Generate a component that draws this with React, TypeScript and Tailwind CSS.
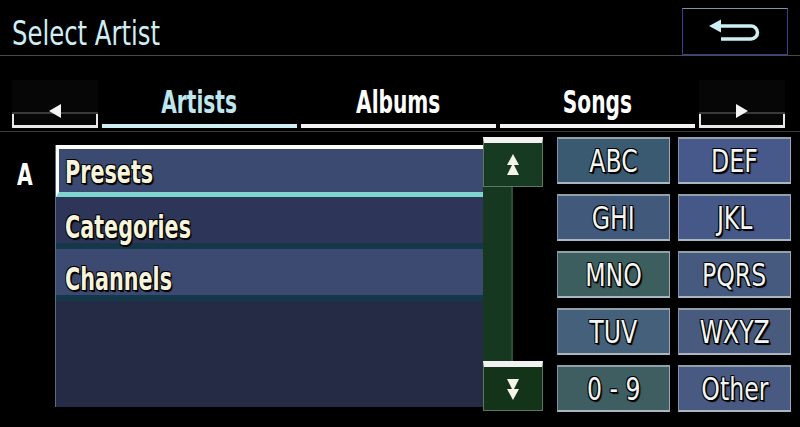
import React from 'react';

const outline =
  '[text-shadow:1px_1px_0_#000,-1px_-1px_0_#000,1px_-1px_0_#000,-1px_1px_0_#000,2px_2px_1px_#000]';

function ReturnIcon() {
  return (
    <svg width="56" height="26" viewBox="0 0 56 26" fill="none">
      <path d="M12 7 H44 A6.5 6.5 0 0 1 44 20 H14" stroke="#cdeef3" strokeWidth="3.5" />
      <path d="M2 7 L14 0.5 L14 13.5 Z" fill="#cdeef3" />
    </svg>
  );
}

function DoubleArrow({ down }: { down?: boolean }) {
  return (
    <svg width="16" height="24" viewBox="0 0 16 24" className={down ? 'rotate-180' : ''}>
      <path d="M8 1 L14 12 L2 12 Z" fill="#f4f4ea" />
      <path d="M8 10 L14 22 L2 22 Z" fill="#f4f4ea" />
    </svg>
  );
}

function SideButton({ dir }: { dir: 'left' | 'right' }) {
  return (
    <div className="relative h-[48px] w-[86px] bg-[#060606] flex items-center justify-center">
      <div className="absolute left-0 right-0 top-[32px] h-[2px] bg-[#3a3a3a]" />
      <div className="absolute left-0 right-0 bottom-0 h-[14px] border-l-2 border-r-2 border-b-[3px] border-[#e8e8e8]" />
      <svg width="14" height="16" viewBox="0 0 14 16" className={`relative mt-[14px] ${dir === 'right' ? 'rotate-180' : ''}`}>
        <path d="M1 8 L13 1 L13 15 Z" fill="#f4f4f4" />
      </svg>
    </div>
  );
}

function Tab({ label, active }: { label: string; active?: boolean }) {
  return (
    <div className="relative h-[48px] w-[195px] flex items-start justify-center">
      <span
        className={`inline-block scale-x-[0.7] font-bold text-[32px] leading-[44px] ${
          active ? 'text-[#bfe6ee]' : 'text-white'
        }`}
      >
        {label}
      </span>
      <div
        className={`absolute left-0 right-0 bottom-0 h-[4px] ${active ? 'bg-[#cdeef3]' : 'bg-[#f2f2f2]'}`}
      />
    </div>
  );
}

function Row({ label, tone, selected }: { label: string; tone: string; selected?: boolean }) {
  return (
    <div
      className={`h-[52px] flex items-center ${tone} ${
        selected
          ? 'border-t-[4px] border-l-[3px] border-white border-b-[5px] border-b-[#7fd6cf] pt-[2px]'
          : 'border-b-[6px] border-b-[#14384a] pt-[14px]'
      }`}
    >
      <span
        className={`inline-block origin-left scale-x-[0.72] font-bold text-[32px] text-[#f6f4dc] ${outline} ${
          selected ? 'ml-[6px]' : 'ml-[9px]'
        }`}
      >
        {label}
      </span>
    </div>
  );
}

function Key({ label, tone }: { label: string; tone: string }) {
  return (
    <div
      className={`h-[47px] flex items-center justify-center border-t-2 border-t-[#8ea2a8] border-l border-l-[#7f90a8] border-r border-r-[#9aa8b8] border-b-2 border-b-[#aab6c0] ${tone}`}
    >
      <span className={`inline-block scale-x-[0.82] text-[32px] text-[#f2f6f4] ${outline}`}>{label}</span>
    </div>
  );
}

export default function App() {
  const keys: [string, string][] = [
    ['ABC', 'bg-[#3a5a72]'],
    ['DEF', 'bg-[#47588a]'],
    ['GHI', 'bg-[#41597a]'],
    ['JKL', 'bg-[#465888]'],
    ['MNO', 'bg-[#3d5e5e]'],
    ['PQRS', 'bg-[#465a80]'],
    ['TUV', 'bg-[#44607a]'],
    ['WXYZ', 'bg-[#485a7e]'],
    ['0 - 9', 'bg-[#3e5e62]'],
    ['Other', 'bg-[#495a82]'],
  ];

  return (
    <div
      className="w-[800px] h-[427px] bg-black overflow-hidden"
      style={{ fontFamily: '"DejaVu Sans Condensed", "DejaVu Sans", sans-serif' }}
    >
      {/* header */}
      <div className="h-[56px] flex items-start justify-between border-b border-[#4a4a4a]">
        <span className="inline-block origin-left scale-x-[0.82] ml-[12px] mt-[9px] text-[33px] text-[#cfeef4]">
          Select Artist
        </span>
        <div className="mt-[8px] mr-[12px] w-[106px] h-[47px] border border-[#3b3f90] border-t-[#8890b0] flex items-center justify-center">
          <ReturnIcon />
        </div>
      </div>

      {/* tabs */}
      <div className="mt-[24px] flex gap-[4px] pl-[12px]">
        <SideButton dir="left" />
        <Tab label="Artists" active />
        <Tab label="Albums" />
        <Tab label="Songs" />
        <SideButton dir="right" />
      </div>
      <div className="mt-[3px] h-px bg-[#3c3c3c]" />

      {/* main */}
      <div className="mt-[5px] flex">
        <div className="w-[55px] pt-[15px] pl-[17px]">
          <span className="text-[30px] text-white font-bold inline-block scale-x-[0.75] origin-left">A</span>
        </div>

        <div className="w-[428px] mt-[8px] h-[262px] flex flex-col bg-[#252b45] border-l border-[#5a6c80]">
          <Row label="Presets" tone="bg-[#3b4a70]" selected />
          <Row label="Categories" tone="bg-[#2d3659]" />
          <Row label="Channels" tone="bg-[#3c4a72]" />
        </div>

        <div className="w-[60px] h-[274px] flex flex-col">
          <div className="h-[50px] bg-[#163a22] border-t-[6px] border-t-[#f2f2f2] border-l border-r border-b border-[#5a7a60] flex items-center justify-center">
            <DoubleArrow />
          </div>
          <div className="flex-1 w-[30px] bg-[#173820] border-r-2 border-[#2a5030]" />
          <div className="h-[50px] bg-[#133418] border-t-[6px] border-t-[#f2f2f2] border-l border-r border-b border-[#5a7a60] flex items-center justify-center">
            <DoubleArrow down />
          </div>
        </div>

        <div className="ml-[14px] w-[234px] grid grid-cols-2 gap-x-[8px] gap-y-[10px]">
          {keys.map(([label, tone]) => (
            <Key key={label} label={label} tone={tone} />
          ))}
        </div>
      </div>
    </div>
  );
}
